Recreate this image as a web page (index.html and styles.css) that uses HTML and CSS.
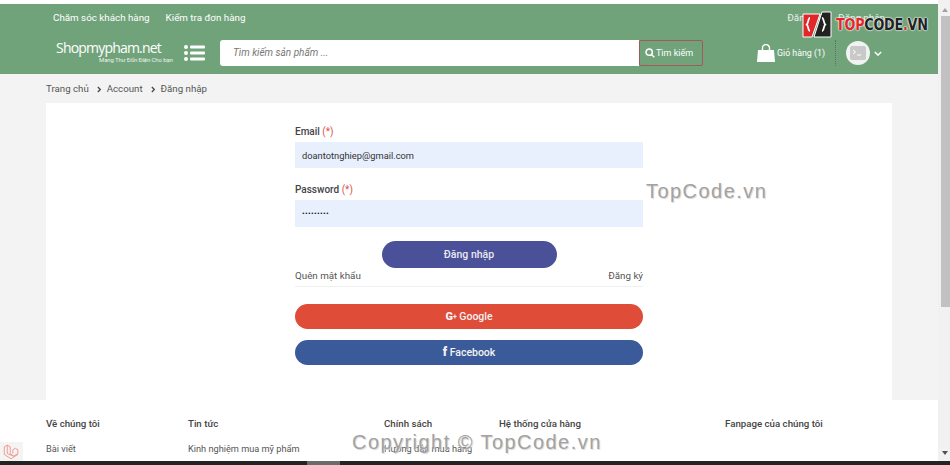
FILE: index.html
```html
<!DOCTYPE html>
<html lang="vi">
<head>
<meta charset="utf-8">
<title>Đăng nhập</title>
<link rel="stylesheet" href="styles.css">
</head>
<body>
<div class="window">
  <div class="page">
    <header class="header">
      <div class="top-row">
        <div class="top-links"><a>Chăm sóc khách hàng</a><a>Kiểm tra đơn hàng</a></div>
        <div class="auth-links"><a>Đăng ký</a><a>Đăng nhập</a></div>
      </div>
      <div class="main-row">
        <div class="logo">
          <span class="logo-name">Shopmypham.net</span>
          <span class="logo-tag">Mang Thư Đốn Điện Cho bạn</span>
        </div>
        <svg class="menu-icon" viewBox="0 0 21 16" width="21" height="16" aria-hidden="true">
          <circle cx="2" cy="2" r="2"/><circle cx="2" cy="8" r="2"/><circle cx="2" cy="14" r="2"/>
          <rect x="6" y="0.5" width="15" height="3" rx="1"/><rect x="6" y="6.5" width="15" height="3" rx="1"/><rect x="6" y="12.5" width="15" height="3" rx="1"/>
        </svg>
        <div class="search">
          <div class="search-input">Tìm kiếm sản phẩm ...</div>
          <div class="search-btn">
            <svg viewBox="0 0 12 12" width="10" height="10" aria-hidden="true"><circle cx="5" cy="5" r="3.8" class="stroke"/><path d="M8 8l3.2 3.2" class="stroke"/></svg>
            <span>Tìm kiếm</span>
          </div>
        </div>
        <div class="cart">
          <svg viewBox="0 0 18 18" width="18" height="18" aria-hidden="true"><path d="M1 6h16l1 12H0z" fill="#fff"/><path d="M5.5 7V4a3.5 3.5 0 0 1 7 0v3" fill="none" stroke="#fff" stroke-width="1.4"/></svg>
          <span>Giỏ hàng (1)</span>
        </div>
        <div class="user">
          <div class="avatar"><svg viewBox="0 0 16 14" width="16" height="14" aria-hidden="true"><rect width="16" height="14" rx="2" fill="#c9c9c9"/><path d="M3 4l2.5 2L3 8M7 9h4" fill="none" stroke="#fff" stroke-width="1"/></svg></div>
          <svg viewBox="0 0 10 6" width="8" height="5" aria-hidden="true"><path d="M1 1l4 4 4-4" fill="none" stroke="#fff" stroke-width="1.8"/></svg>
        </div>
      </div>
    </header>

    <nav class="crumbs"><span>Trang chủ</span><svg class="chev" viewBox="0 0 6 8" width="5" height="7" aria-hidden="true"><path d="M1 1l3 3-3 3"/></svg><span>Account</span><svg class="chev" viewBox="0 0 6 8" width="5" height="7" aria-hidden="true"><path d="M1 1l3 3-3 3"/></svg><span>Đăng nhập</span></nav>

    <main class="card">
      <form class="form">
        <label class="label">Email <b>(*)</b></label>
        <div class="field">doantotnghiep@gmail.com</div>
        <label class="label second">Password <b>(*)</b></label>
        <div class="field dots">•••••••••</div>
        <div class="btn-row"><div class="btn-login">Đăng nhập</div></div>
        <div class="links"><span>Quên mật khẩu</span><span>Đăng ký</span></div>
        <div class="btn-social google"><span class="gplus">G<sup>+</sup></span> Google</div>
        <div class="btn-social facebook"><span class="fb">f</span> Facebook</div>
      </form>
    </main>

    <footer class="footer">
      <div class="col c1"><h4>Về chúng tôi</h4><p>Bài viết</p></div>
      <div class="col c2"><h4>Tin tức</h4><p>Kinh nghiệm mua mỹ phẩm</p></div>
      <div class="col c3"><h4>Chính sách</h4><p>Hướng dẫn mua hàng</p></div>
      <div class="col c4"><h4>Hệ thống cửa hàng</h4></div>
      <div class="col c5"><h4>Fanpage của chúng tôi</h4></div>
    </footer>
  </div>

  <div class="scrollbar">
    <div class="arrow up"></div>
    <div class="track"><div class="thumb"></div></div>
    <div class="arrow down"></div>
  </div>
</div>
<div class="taskbar"><div class="task-active"></div></div>

<div class="debugbar">
  <svg viewBox="0 0 20 20" width="17" height="17" aria-hidden="true"><path d="M1.5 4.5L5 2.5l3.5 2v8.5l4 2.3 5-2.8V8l-3-1.8-3 1.8v4.5M1.5 4.5v9l8 5 8-5M5 2.5v10l7.5 3" fill="none" stroke="#e98f88" stroke-width="1"/></svg>
</div>

<div class="brand">
  <svg class="brand-mark" viewBox="0 0 30 27" width="30" height="27" aria-hidden="true">
    <path d="M1 3h17l-8 23H1z" fill="#e0282a" stroke="#fff" stroke-width="1"/>
    <path d="M20 1h9v25H12z" fill="#222" stroke="#fff" stroke-width="1"/>
    <path d="M8 7c-2 0-1.500 5-3.200 6.500C6.500 15 6 20 8 20" fill="none" stroke="#fff" stroke-width="1.800"/>
    <path d="M20 7c2 0 1.500 5 3.200 6.500C21.500 15 22 20 20 20" fill="none" stroke="#fff" stroke-width="1.800"/>
  </svg>
  <span class="brand-text"><em>TOP</em>CODE<em>.</em>VN</span>
</div>
<div class="wm wm-mid">TopCode.vn</div>
<div class="wm wm-bottom">Copyright © TopCode.vn</div>
</body>
</html>
```

FILE: styles.css
```css
* { box-sizing: border-box; }
html, body { margin: 0; height: 100%; overflow: hidden; }
body {
  position: relative;
  width: 950px;
  height: 465px;
  background: #fff;
  font-family: Roboto, "Liberation Sans", sans-serif;
  font-size: 10px;
  color: #4a4a4a;
  display: flex;
  flex-direction: column;
}
.window { display: flex; height: 461px; }
.page {
  width: 938px;
  height: 461px;
  padding-top: 4px;
  background: #fff;
  display: flex;
  flex-direction: column;
}

/* Header */
.header { height: 70px; background: #71a37b; color: #fff; padding: 0 0 0 53px; flex: none; }
.top-row { display: flex; justify-content: space-between; height: 36px; padding: 7px 53px 0 0; line-height: 14px; font-size: 9.8px; }
.top-links a { margin-right: 16px; }
.auth-links a { margin-left: 16px; }
.auth-links { opacity: .85; }
.main-row { display: flex; align-items: center; height: 26px; }
.logo { width: 131px; padding-left: 3px; height: 26px; display: flex; flex-direction: column; margin-top: -3px; }
.logo-name { font-family: "Open Sans", sans-serif; font-size: 14px; line-height: 18px; letter-spacing: -.8px; }
.logo-tag { font-size: 6px; line-height: 6px; margin-left: 43px; white-space: nowrap; letter-spacing: -.1px; opacity: .85; }
.menu-icon { fill: #fff; flex: none; }
.search { display: flex; height: 26px; margin-left: 15px; width: 483px; flex: none; }
.search-input {
  width: 419px; background: #fff; border-radius: 3px 0 0 3px; color: #777;
  font-style: italic; padding-left: 13px; line-height: 26px; font-size: 10px;
}
.search-btn {
  width: 64px; border: 1px solid #a5585a; border-radius: 2px; display: flex; align-items: center;
  justify-content: center; font-size: 9px; gap: 1px; padding-right: 4px;
}
.stroke { fill: none; stroke: #fff; stroke-width: 1.8; }
.cart { display: flex; align-items: center; gap: 2px; margin-left: 54px; width: 79px; height: 26px; border-right: 1px dotted #55755c; font-size: 8.8px; flex: none; }
.user { display: flex; align-items: center; gap: 4px; margin-left: 10px; }
.avatar { width: 24px; height: 24px; border-radius: 50%; background: #f2f2f2; display: flex; align-items: center; justify-content: center; }

/* Breadcrumb */
.crumbs { height: 29px; flex: none; background: #f3f3f3; padding-left: 46px; display: flex; align-items: center; color: #555; font-size: 9.7px; }
.chev { margin: 1px 5px 0 8px; fill: none; stroke: #444; stroke-width: 1.5; }

/* Card */
.card { flex: none; height: 297px; background: #fff; box-shadow: -46px 0 0 #f3f3f3, 46px 0 0 #f3f3f3; margin: 0 46px; padding-top: 21px; }
.form { width: 348px; margin-left: 249px; }
.label { display: block; font-weight: 500; font-size: 10px; line-height: 16px; color: #444; height: 18px; }
.label b { color: #d9534f; font-weight: 400; }
.label.second { margin-top: 14px; }
.field { height: 26px; background: #e8f0fe; padding-left: 7px; line-height: 27px; font-size: 9.3px; color: #333; }
.dots { font-size: 8px; letter-spacing: .3px; height: 27px; line-height: 27px; color: #111; }
.btn-row { display: flex; justify-content: center; margin-top: 14px; }
.btn-login { width: 175px; height: 27px; background: #4a5199; border-radius: 14px; color: #e9e9f2; text-align: center; line-height: 27px; font-weight: 500; font-size: 10.5px; }
.links { display: flex; justify-content: space-between; height: 19px; line-height: 15px; border-bottom: 1px solid #f0f0f0; font-size: 9.8px; color: #555; }
.btn-social { height: 25px; border-radius: 13px; color: #f3f3f3; text-align: center; line-height: 25px; font-weight: 500; font-size: 10.5px; }
.google { background: #df4c37; margin-top: 17px; }
.facebook { background: #3a5a99; margin-top: 11px; line-height: 24px; }
.gplus { font-weight: 900; font-size: 11px; }
.gplus sup { font-size: 7px; line-height: 0; vertical-align: 1px; }
.fb { font-weight: 900; font-size: 12px; }

/* Footer */
.footer { flex: 1; background: #fff; display: flex; padding-top: 17px; font-size: 9.2px; color: #555; }
.col h4 { margin: 0 0 12px; font-size: 9.7px; font-weight: 500; line-height: 14px; color: #444; }
.col p { margin: 0; line-height: 12px; white-space: nowrap; }
.c1 { margin-left: 46px; width: 142px; }
.c2 { width: 196px; }
.c3 { width: 115px; }
.c4 { width: 226px; }

/* Scrollbar */
.scrollbar { width: 12px; height: 461px; background: #f1f1f1; display: flex; flex-direction: column; align-items: center; padding-left: 2px; }
.arrow { width: 10px; height: 16px; flex: none; display: flex; align-items: center; justify-content: center; }
.arrow::after { content: ""; border-left: 3px solid transparent; border-right: 3px solid transparent; }
.up { height: 12px; margin-top: 4px; }
.up::after { border-bottom: 4px solid #a3a3a3; }
.down::after { border-top: 4px solid #505050; }
.track { flex: 1; width: 9px; }
.thumb { height: 291px; background: #c1c1c1; }

/* Bottom strip */
.taskbar { height: 4px; background: #232323; padding-left: 307px; flex: none; }
.task-active { width: 33px; height: 4px; background: #6b6b6b; }

/* Overlays */
.debugbar {
  position: absolute; left: 0; bottom: 4px; width: 23px; height: 19px; background: #f6f3f3;
  display: flex; align-items: center; justify-content: center;
}
.brand { position: absolute; left: 802px; top: 11px; display: flex; align-items: center; gap: 3px; }
.brand-mark { flex: none; }
.brand-text { font-family: "DejaVu Sans", sans-serif; font-weight: 700; font-size: 16px; letter-spacing: -.3px; color: #222; text-shadow: 0 0 1px #fff, 0 0 2px #fff, 0 0 2px #fff; margin-left: 1px; transform: scaleX(.8); transform-origin: left center; white-space: nowrap; }
.brand-text em { font-style: normal; color: #e0282a; }
.wm { position: absolute; font-family: "Liberation Sans", sans-serif; color: #a2a2a2; white-space: nowrap; text-shadow: 1px 1px 1px #d8d8d8; }
.wm-mid { left: 646px; top: 180px; font-size: 20px; letter-spacing: 1.45px; }
.wm-bottom { left: 352px; top: 431px; font-size: 20px; letter-spacing: 1.45px; }
```
